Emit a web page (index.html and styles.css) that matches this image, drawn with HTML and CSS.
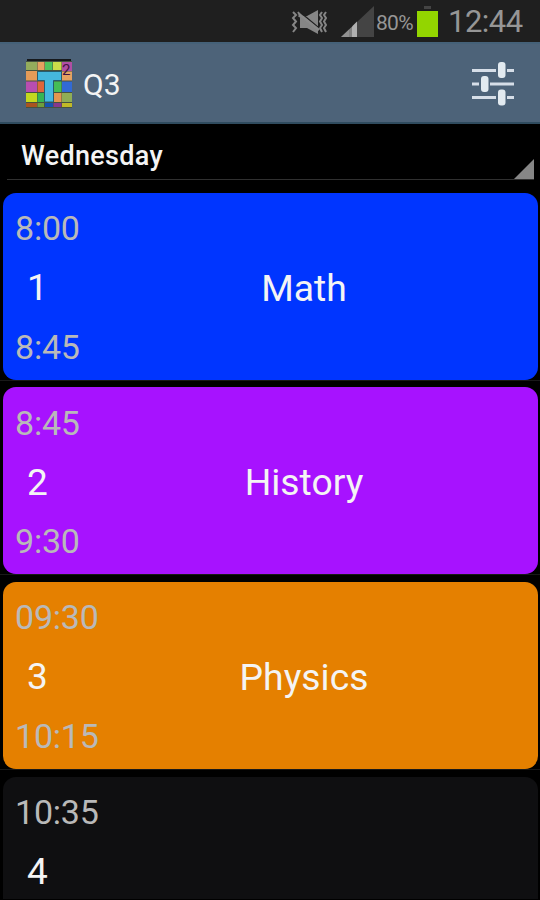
FILE: index.html
```html
<!DOCTYPE html>
<html lang="en">
<head>
<meta charset="utf-8">
<title>Q3</title>
<link rel="stylesheet" href="styles.css">
</head>
<body>
<header class="status">
  <svg class="mute" width="37" height="26" viewBox="0 0 37 26">
    <g fill="none" stroke="#858585" stroke-width="2">
      <path d="M2 2l3 3-3 3 3 3.500-3 3.500 3 3-3 4M7 2l2 3-1 2M31 2l-2 3 2 3-2 3.500 2 3.500-2 3 2 4M35 2l-2 3 2 3-2 3.500 2 3.500-2 3 2 4"/>
    </g>
    <path fill="#858585" d="M9 6h7L27 0v24l-11-6H9z"/>
    <path stroke="#1f1f1f" stroke-width="1.600" d="M10 3l18 15"/>
    <path stroke="#8a8a8a" stroke-width="2.500" d="M8 4l20 16"/>
  </svg>
  <svg class="signal" width="33" height="32" viewBox="0 0 33 32">
    <path fill="#444" d="M33 0v31H0z"/>
    <path fill="#929292" d="M0 31L8 23.500V31z"/>
    <path fill="#808080" d="M8 23.500l3-2.800V31H8z"/>
    <path fill="#b0b0b0" d="M11 20.500l5-5V31h-5z"/>
  </svg>
  <span class="percent">80%</span>
  <svg class="battery" width="21" height="32" viewBox="0 0 21 32">
    <path fill="#444" d="M7 0h7v3H7z"/>
    <path fill="#93d500" d="M0 5h21v26H0z"/>
  </svg>
  <span class="clock">12:44</span>
</header>
<div class="bar">
  <svg class="logo" width="48" height="50" viewBox="0 0 48 50">
    <path fill="#46523f" d="M1 2h46v47H1z"/>
    <path fill="#16191c" d="M2 0h44v2H2z"/>
    <path fill="#94ac5c" d="M1 3h11v8H1z"/><path fill="#e5a160" d="M12.500 3h7v8h-7z"/><path fill="#4fc45e" d="M20 3h7.500v8H20z"/><path fill="#cbdc4a" d="M28 3h8.500v8H28z"/><path fill="#b04fa4" d="M37 3h10v9H37z"/>
    <path fill="#e59b58" d="M1 12h11v9.500H1z"/><path fill="#e5a160" d="M37 12.500h10v9H37z"/>
    <path fill="#b84db0" d="M1 22.500h11V33H1z"/><path fill="#df653b" d="M12.500 22.500H19V33h-6.500z"/><path fill="#45bd56" d="M29 22.500h7.500V33H29z"/><path fill="#316ad5" d="M37 22.500h10V33H37z"/>
    <path fill="#c4d81f" d="M1 34h11v9H1z"/><path fill="#35b653" d="M12.500 34H19v9h-6.500z"/><path fill="#e2964f" d="M29 34h7.500v9H29z"/><path fill="#8fad55" d="M37 34h10v9H37z"/>
    <path fill="#a95420" d="M1 44h11v4H1z"/><path fill="#6f9e3d" d="M12.500 44H19v4h-6.500z"/><path fill="#1554af" d="M20 44h8v4h-8z"/><path fill="#85388e" d="M28.500 44h8v4h-8z"/><path fill="#c2b927" d="M37 44h10v4H37z"/>
    <path fill="#45b8df" stroke="#265d70" d="M12.500 12.500h24v9H28.500V43h-9V21.500h-7z"/>
    <text class="logo-mark" x="37" y="16">2</text>
  </svg>
  <h1 class="title">Q3</h1>
  <svg class="tune" width="42" height="44" viewBox="0 0 42 44">
    <path stroke="#d6dee8" stroke-width="3" d="M0 8.500h24M35 8.500h7M0 22h7M18 22h24M0 35.500h24M35 35.500h7"/>
    <g fill="#e2eaf0"><rect x="26" y="0" width="7.500" height="16" rx="3"/><rect x="9" y="14" width="7.500" height="16" rx="3"/><rect x="26" y="27.500" width="7.500" height="16" rx="3"/></g>
  </svg>
</div>
<div class="spinner">
  <span class="day">Wednesday</span>
  <svg class="corner" width="20" height="20" viewBox="0 0 20 20"><path fill="#868686" d="M20 0v20H0z"/></svg>
</div>
<main class="lessons">
  <section class="row"><div class="card math"><div class="times"><span class="time">8:00</span><span class="num">1</span><span class="time">8:45</span></div><span class="subject">Math</span></div></section>
  <section class="row"><div class="card history"><div class="times"><span class="time">8:45</span><span class="num">2</span><span class="time">9:30</span></div><span class="subject">History</span></div></section>
  <section class="row"><div class="card physics"><div class="times"><span class="time">09:30</span><span class="num">3</span><span class="time">10:15</span></div><span class="subject">Physics</span></div></section>
  <section class="row last"><div class="card empty"><div class="times"><span class="time">10:35</span><span class="num">4</span></div></div></section>
</main>
</body>
</html>
```
FILE: styles.css
```css
* { box-sizing: border-box; }
body {
  margin: 0;
  width: 540px;
  height: 900px;
  overflow: hidden;
  display: flex;
  flex-direction: column;
  background: #000;
  color: #f4f4f4;
  font-family: Roboto, sans-serif;
}
svg { display: block; flex: none; }
.status {
  flex: none;
  height: 42px;
  display: flex;
  align-items: flex-start;
  padding-left: 291px;
  background: #1f1f1f;
  color: #969696;
}
.mute { margin-top: 10px; }
.signal { margin: 6px 0 0 13px; }
.percent { margin: 0 0 0 2px; width: 41px; font-size: 21px; line-height: 46px; letter-spacing: -0.7px; }
.battery { margin-top: 6px; }
.clock { margin-left: 10px; font-size: 31px; line-height: 43px; letter-spacing: -0.5px; }
.bar {
  flex: none;
  height: 82px;
  display: flex;
  align-items: center;
  padding: 1px 26px 0 25px;
  background: #4d6379;
  border-top: 2px solid #456178;
  border-bottom: 2px solid #304c5f;
}
.logo-mark { font: 15px Roboto, sans-serif; fill: #421443; }
.title { margin: 2px auto 0 10px; font-size: 30px; font-weight: 400; line-height: 40px; }
.spinner {
  flex: none;
  height: 56px;
  margin: 0 6px 0 7px;
  display: flex;
  align-items: flex-end;
  justify-content: space-between;
  border-bottom: 1px solid #303030;
}
.day { padding-left: 14px; font-size: 27px; font-weight: 500; line-height: 46px; letter-spacing: 0.3px; }
.lessons { padding-top: 6px; }
.row {
  display: flex;
  flex-direction: column;
  justify-content: flex-end;
  height: 194.600px;
  padding: 0 2px 0 3px;
  border-bottom: 1px solid #191919;
}
.card { height: 187px; border-radius: 13px; display: flex; }
.times { width: 140px; padding: 15.500px 0 0 12px; display: flex; flex-direction: column; }
.time { height: 40px; line-height: 40px; font-size: 34px; letter-spacing: -0.2px; color: #b9b9b9; }
.num { height: 78.500px; line-height: 80px; padding-left: 12px; font-size: 37px; }
.subject { width: 322px; text-align: center; font-size: 37.300px; line-height: 191px; }
.math { background: #0035ff; }
.history { background: #a712ff; }
.physics { background: #e58000; }
.empty { background: #0f0f11; height: 122px; border-radius: 13px 13px 0 0; }
.last { height: 130px; justify-content: flex-start; padding-top: 7px; border-bottom: 0; }
```
